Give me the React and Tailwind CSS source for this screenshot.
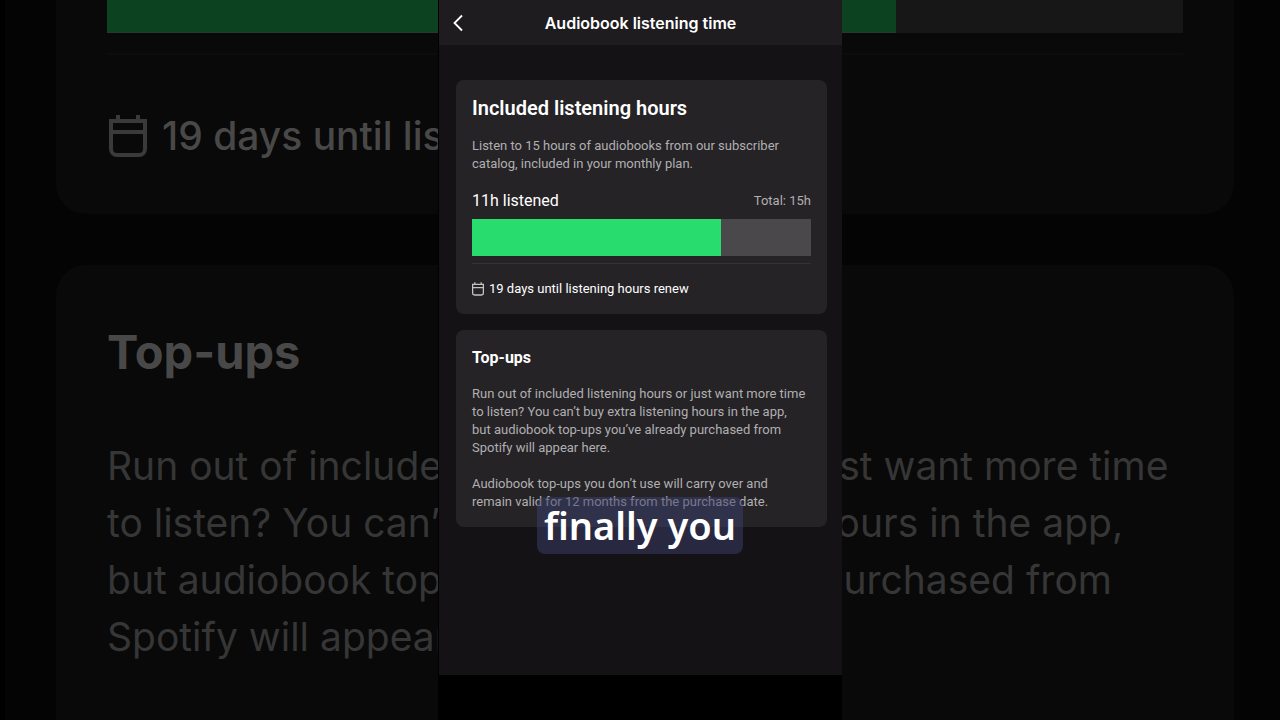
const TOTAL_HOURS = 15;
const LISTENED_HOURS = 11;
const progress = `${(LISTENED_HOURS / TOTAL_HOURS) * 100}%`;

const topUpLines = [
  'Run out of included listening hours or just want more time',
  'to listen? You can’t buy extra listening hours in the app,',
  'but audiobook top-ups you’ve already purchased from',
  'Spotify will appear here.',
];

function CalendarIcon({ className }) {
  return (
    <svg viewBox="0 0 38 42" fill="none" stroke="currentColor" strokeWidth="4" className={className} aria-hidden="true">
      <path d="M2 6h34v28a6 6 0 0 1-6 6H8a6 6 0 0 1-6-6V6Z" />
      <path d="M2 17h34M9 0v8M29 0v8" />
    </svg>
  );
}

function Backdrop() {
  return (
    <div className="absolute inset-0 overflow-hidden bg-black pl-[5px] font-['Inter',sans-serif]" aria-hidden="true">
      <div className="flex h-full flex-col gap-[51px] bg-[#040404] pr-[46px] pl-[51px]">
        <div className="h-[214px] shrink-0 rounded-b-[30px] bg-[#090909] px-[51px]">
          <div className="h-[33px] bg-[#171717]">
            <div className="h-full border-b border-[#243a2a] bg-[#0c4220]" style={{ width: progress }} />
          </div>
          <div className="mt-5 h-[2px] bg-[#0d0d0d]" />
          <div className="mt-[52px] flex items-center gap-[15px] text-[#484848]">
            <CalendarIcon className="ml-[2px] h-[42px] w-[38px] text-[#3a3a3a]" />
            <span className="text-[39px] leading-[57px] font-medium whitespace-nowrap">19 days until listening hours renew</span>
          </div>
        </div>
        <div className="h-[620px] shrink-0 rounded-t-[30px] bg-[#090909] px-[51px] pt-[55px]">
          <div className="text-[47px] leading-[64px] font-bold text-[#484848]">Top-ups</div>
          <div className="mt-[53px] text-[39px] leading-[57px] whitespace-nowrap text-[#363636]">
            {topUpLines.map((line) => (
              <div key={line}>{line}</div>
            ))}
          </div>
        </div>
      </div>
    </div>
  );
}

function Card({ children, className }) {
  return <section className={`rounded-lg bg-[#252326] px-4 ${className}`}>{children}</section>;
}

export default function App() {
  return (
    <div className="relative min-h-screen overflow-hidden bg-black font-['Roboto',sans-serif] text-white">
      <Backdrop />
      <main className="relative mx-auto flex min-h-screen w-full max-w-[404px] flex-col border-l border-black bg-[#141215]">
        <header className="grid h-[45px] grid-cols-[40px_1fr_40px] items-center bg-[#1e1c1f]">
          <button type="button" aria-label="Back" className="flex h-full items-center pl-[14px]">
            <svg viewBox="0 0 10 18" fill="none" stroke="currentColor" strokeWidth="1.8" className="h-[18px] w-[10px]">
              <path d="M9 1.5 1.5 9 9 16.5" />
            </svg>
          </button>
          <h1 className="text-center font-['Inter',sans-serif] text-[16px] leading-6 font-semibold">Audiobook listening time</h1>
        </header>

        <div className="flex grow flex-col gap-4 pt-[35px] pr-[15px] pl-[17px]">
          <Card className="pt-4 pb-3">
            <h2 className="text-[20px] leading-6 font-semibold">Included listening hours</h2>
            <p className="mt-[17px] text-[13px] leading-[18px] text-[#b0afb1]">
              Listen to 15 hours of audiobooks from our subscriber
              <br />
              catalog, included in your monthly plan.
            </p>
            <div className="mt-4 flex items-center justify-between leading-6">
              <span className="text-[16px]">11h listened</span>
              <span className="text-[13px] text-[#b0afb1]">Total: 15h</span>
            </div>
            <div
              role="progressbar"
              aria-label="Listening hours used"
              aria-valuemin={0}
              aria-valuemax={TOTAL_HOURS}
              aria-valuenow={LISTENED_HOURS}
              className="mt-[6px] h-[37px] bg-[#4a484b]"
            >
              <div className="h-full bg-[#28dc6d]" style={{ width: progress }} />
            </div>
            <hr className="mt-[7px] border-[#343235]" />
            <div className="mt-[13px] flex items-center gap-[5px] pb-[1px]">
              <CalendarIcon className="h-[14px] w-[12px] text-[#c4c3c5]" />
              <span className="text-[13px] leading-6">19 days until listening hours renew</span>
            </div>
          </Card>

          <Card className="pt-4 pb-4">
            <h2 className="text-[16px] leading-6 font-bold">Top-ups</h2>
            <p className="mt-[15px] text-[13px] leading-[18px] text-[#b0afb1]">
              {topUpLines.map((line) => (
                <span key={line} className="block whitespace-nowrap">
                  {line}
                </span>
              ))}
            </p>
            <p className="mt-[18px] text-[13px] leading-[18px] text-[#b0afb1]">
              Audiobook top-ups you don’t use will carry over and
              <br />
              remain valid for 12 months from the purchase date.
            </p>
          </Card>
        </div>

        <footer className="h-[45px] bg-black" />

        <div className="absolute top-[497px] right-[99px] flex h-[57px] w-[206px] items-center justify-center rounded-lg bg-[#3c3f6e]/50 font-['Noto_Sans',sans-serif] text-[38px] leading-[57px] font-semibold whitespace-nowrap">
          finally you
        </div>
      </main>
    </div>
  );
}
